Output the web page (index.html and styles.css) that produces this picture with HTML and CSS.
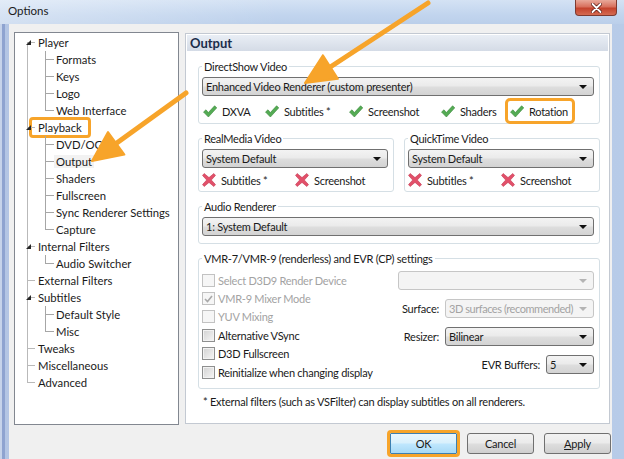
FILE: index.html
```html
<!DOCTYPE html>
<html lang="en">
<head>
    <meta charset="UTF-8" />
    <title>Options</title>
    <link rel="stylesheet" href="styles.css">
</head>
<body>
<div class="window">
    <div class="titlebar">
        <span class="title">Options</span>
        <span class="close">
            <svg width="11" height="10" viewBox="0 0 11 10"><path d="M1.5 1 L9.5 9 M9.5 1 L1.5 9" stroke="#5a1a12" stroke-width="3.4" stroke-linecap="round"/><path d="M1.5 1 L9.5 9 M9.5 1 L1.5 9" stroke="#fff" stroke-width="1.8" stroke-linecap="round"/></svg>
        </span>
    </div>

    <div class="frame">
        <div class="client">
            <div class="main">
                <div class="tree">
                    <ul>
                        <li class="open"><span class="row">Player</span>
                            <ul>
                                <li><span class="row">Formats</span></li>
                                <li><span class="row">Keys</span></li>
                                <li><span class="row">Logo</span></li>
                                <li><span class="row">Web Interface</span></li>
                            </ul>
                        </li>
                        <li class="open"><span class="row"><span class="hl tree-hl">Playback</span></span>
                            <ul>
                                <li><span class="row">DVD/OGM</span></li>
                                <li><span class="row"><span class="sel">Output</span></span></li>
                                <li><span class="row">Shaders</span></li>
                                <li><span class="row">Fullscreen</span></li>
                                <li><span class="row">Sync Renderer Settings</span></li>
                                <li><span class="row">Capture</span></li>
                            </ul>
                        </li>
                        <li class="open"><span class="row">Internal Filters</span>
                            <ul>
                                <li><span class="row">Audio Switcher</span></li>
                            </ul>
                        </li>
                        <li><span class="row">External Filters</span></li>
                        <li class="open"><span class="row">Subtitles</span>
                            <ul>
                                <li><span class="row">Default Style</span></li>
                                <li><span class="row">Misc</span></li>
                            </ul>
                        </li>
                        <li><span class="row">Tweaks</span></li>
                        <li><span class="row">Miscellaneous</span></li>
                        <li><span class="row">Advanced</span></li>
                    </ul>
                </div>

                <div class="page">
                    <div class="page-head">Output</div>
                    <div class="page-body">
                        <fieldset class="group ds">
                            <legend>DirectShow Video</legend>
                            <div class="combo">Enhanced Video Renderer (custom presenter)</div>
                            <div class="caps caps-ds">
                                <span class="cap"><svg class="ok" width="14" height="13" viewBox="0 0 14 13"><path d="M0.5 7 L3 4.8 L5.3 7.6 L11.6 0.8 L13.8 2.8 L5.4 12 Z"/></svg>DXVA</span>
                                <span class="cap"><svg class="ok" width="14" height="13" viewBox="0 0 14 13"><path d="M0.5 7 L3 4.8 L5.3 7.6 L11.6 0.8 L13.8 2.8 L5.4 12 Z"/></svg>Subtitles *</span>
                                <span class="cap"><svg class="ok" width="14" height="13" viewBox="0 0 14 13"><path d="M0.5 7 L3 4.8 L5.3 7.6 L11.6 0.8 L13.8 2.8 L5.4 12 Z"/></svg>Screenshot</span>
                                <span class="cap"><svg class="ok" width="14" height="13" viewBox="0 0 14 13"><path d="M0.5 7 L3 4.8 L5.3 7.6 L11.6 0.8 L13.8 2.8 L5.4 12 Z"/></svg>Shaders</span>
                                <span class="cap hl"><svg class="ok" width="14" height="13" viewBox="0 0 14 13"><path d="M0.5 7 L3 4.8 L5.3 7.6 L11.6 0.8 L13.8 2.8 L5.4 12 Z"/></svg>Rotation</span>
                            </div>
                        </fieldset>

                        <div class="pair">
                            <fieldset class="group">
                                <legend>RealMedia Video</legend>
                                <div class="combo">System Default</div>
                                <div class="caps caps-x">
                                    <span class="cap"><svg class="no" width="14" height="14" viewBox="0 0 14 14"><path d="M2.2 0.5 L7 4.6 L11.8 0.5 L13.5 2.4 L9.3 7 L13.5 11.6 L11.8 13.5 L7 9.4 L2.2 13.5 L0.5 11.6 L4.7 7 L0.5 2.4 Z"/></svg>Subtitles *</span>
                                    <span class="cap"><svg class="no" width="14" height="14" viewBox="0 0 14 14"><path d="M2.2 0.5 L7 4.6 L11.8 0.5 L13.5 2.4 L9.3 7 L13.5 11.6 L11.8 13.5 L7 9.4 L2.2 13.5 L0.5 11.6 L4.7 7 L0.5 2.4 Z"/></svg>Screenshot</span>
                                </div>
                            </fieldset>
                            <fieldset class="group">
                                <legend>QuickTime Video</legend>
                                <div class="combo">System Default</div>
                                <div class="caps caps-x">
                                    <span class="cap"><svg class="no" width="14" height="14" viewBox="0 0 14 14"><path d="M2.2 0.5 L7 4.6 L11.8 0.5 L13.5 2.4 L9.3 7 L13.5 11.6 L11.8 13.5 L7 9.4 L2.2 13.5 L0.5 11.6 L4.7 7 L0.5 2.4 Z"/></svg>Subtitles *</span>
                                    <span class="cap"><svg class="no" width="14" height="14" viewBox="0 0 14 14"><path d="M2.2 0.5 L7 4.6 L11.8 0.5 L13.5 2.4 L9.3 7 L13.5 11.6 L11.8 13.5 L7 9.4 L2.2 13.5 L0.5 11.6 L4.7 7 L0.5 2.4 Z"/></svg>Screenshot</span>
                                </div>
                            </fieldset>
                        </div>

                        <fieldset class="group audio">
                            <legend>Audio Renderer</legend>
                            <div class="combo">1: System Default</div>
                        </fieldset>

                        <fieldset class="group vmr">
                            <legend>VMR-7/VMR-9 (renderless) and EVR (CP) settings</legend>
                            <div class="vmr-grid">
                                <div class="checks">
                                    <label class="check off"><span class="box"></span>Select D3D9 Render Device</label>
                                    <label class="check off"><span class="box"><svg width="9" height="8" viewBox="0 0 9 8"><path d="M1 4 L3.5 6.5 L8 1" fill="none" stroke="#a8a8a8" stroke-width="1.6"/></svg></span>VMR-9 Mixer Mode</label>
                                    <label class="check off"><span class="box"></span>YUV Mixing</label>
                                    <label class="check"><span class="box"></span>Alternative VSync</label>
                                    <label class="check"><span class="box"></span>D3D Fullscreen</label>
                                    <label class="check"><span class="box"></span>Reinitialize when changing display</label>
                                </div>
                                <div class="settings">
                                    <div class="combo off"></div>
                                    <div class="setting">Surface:<div class="combo off">3D surfaces (recommended)</div></div>
                                    <div class="setting">Resizer:<div class="combo">Bilinear</div></div>
                                    <div class="setting evr">EVR Buffers:<div class="combo">5</div></div>
                                </div>
                            </div>
                        </fieldset>

                        <p class="note">* External filters (such as VSFilter) can display subtitles on all renderers.</p>
                    </div>
                </div>
            </div>

            <div class="buttons">
                <span class="btn default hl">OK</span>
                <span class="btn">Cancel</span>
                <span class="btn"><u>A</u>pply</span>
            </div>
        </div>
    </div>

    <!-- callout arrows drawn over the dialog -->
    <svg class="arrows" width="624" height="459" viewBox="0 0 624 459">
        <g fill="#f7a42a" stroke="#f7a42a" stroke-linejoin="round">
            <line x1="428" y1="3" x2="328" y2="68.5" stroke-width="5" stroke-linecap="round"/>
            <polygon points="305,83 337.9,78.8 322.9,55.2" stroke-width="2"/>
            <line x1="186" y1="93" x2="114" y2="145" stroke-width="5" stroke-linecap="round"/>
            <polygon points="92,161 124.4,154.6 108,132" stroke-width="2"/>
        </g>
    </svg>
</div>
</body>
</html>
```

FILE: styles.css
```css
* { box-sizing: border-box; }
body {
    margin: 0;
    font-family: Lato, "Open Sans", sans-serif;
    font-size: 11px;
    letter-spacing: -0.25px;
    color: #1a1a1a;
}

.window {
    position: relative;
    width: 624px;
    height: 459px;
    overflow: hidden;
    display: flex;
    flex-direction: column;
    background: linear-gradient(to right, #c6d3ea 0, #c6d3ea 2px, #8ea3d0 2px, #8ea3d0 5px, #b3c5e4 5px, #bccfea 60%, #b7cbe8);
}

/* ───── title bar ───── */
.titlebar {
    height: 24px;
    flex: none;
    display: flex;
    justify-content: space-between;
    align-items: flex-start;
    padding-left: 8px;
    background: linear-gradient(to right, rgba(255,255,255,0.35), rgba(255,255,255,0) 45%),
                linear-gradient(#d4e2f4, #c2d5ee 60%, #bbcfea);
}
.title {
    line-height: 22px;
    font-size: 11.5px;
    letter-spacing: 0;
    color: #1b1b1b;
}
.close {
    width: 42px;
    height: 16px;
    margin-right: 7px;
    display: flex;
    align-items: center;
    justify-content: center;
    border: 1px solid #7e3a30;
    border-top: 0;
    border-radius: 0 0 4px 4px;
    background: linear-gradient(#e9a99a, #d8705d 45%, #c4432d 55%, #d56b52);
}

.frame {
    flex: 1;
    display: flex;
    padding: 0 12px 0 9px;
}
.client {
    flex: 1;
    background: #f0f0f0;
    padding: 8px 2px 0 5px;
}
.main {
    display: flex;
    gap: 6px;
    height: 393px;
}

/* ───── tree ───── */
.tree {
    width: 165px;
    flex: none;
    background: #fff;
    border: 1px solid #828790;
    padding-top: 1px;
    font-size: 11.3px;
    letter-spacing: 0;
}
.tree ul { list-style: none; margin: 0; padding: 0; }
.tree li { position: relative; }
.tree .row {
    display: block;
    height: 17px;
    line-height: 17px;
    padding-left: 23px;
    white-space: nowrap;
    position: relative;
}
.tree ul ul .row { padding-left: 41px; }

/* connector lines */
.tree > ul > li::before {
    content: "";
    position: absolute;
    left: 12px;
    top: 0;
    bottom: 0;
    border-left: 1px solid #b9b9b9;
}
.tree > ul > li:first-child::before { top: 8px; }
.tree > ul > li:last-child::before { bottom: auto; height: 9px; }
.tree > ul > li::after {
    content: "";
    position: absolute;
    left: 12px;
    top: 8px;
    width: 8px;
    border-top: 1px solid #b9b9b9;
}
.tree ul ul li::before {
    content: "";
    position: absolute;
    left: 30px;
    top: 0;
    bottom: 0;
    border-left: 1px solid #a6a6a6;
}
.tree ul ul li:last-child::before { bottom: auto; height: 9px; }
.tree ul ul li::after {
    content: "";
    position: absolute;
    left: 30px;
    top: 8px;
    width: 9px;
    border-top: 1px solid #a6a6a6;
}
/* expanded-node triangle */
.tree > ul > li.open > .row::before {
    content: "";
    position: absolute;
    left: 11px;
    top: 6px;
    z-index: 1;
    border-style: solid;
    border-width: 0 0 5px 5px;
    border-color: transparent transparent #262626 transparent;
}
.tree .sel { background: #f2f2f2; padding: 0 2px; margin-left: -2px; }
.tree-hl {
    display: inline-block;
    vertical-align: top;
    margin: 1px 0 0 -6px;
    padding: 0 6px;
    line-height: 15px;
}

/* ───── property page ───── */
.page {
    flex: 1;
    height: 391px;
    margin-top: 1px;
    border: 1px solid #c3c9d2;
    background: #fff;
    padding: 1px;
}
.page-head {
    height: 16px;
    line-height: 16px;
    padding-left: 3px;
    font-size: 13px;
    letter-spacing: 0;
    font-weight: bold;
    color: #1b2d4a;
    background: linear-gradient(#e9eef5, #d4dbe6);
}
.page-body { padding: 8px 8px 0 11px; }

.group {
    margin: 0;
    min-width: 0;
    padding: 3px 5px 0 3px;
    border: 1px solid #d5dfe5;
    border-radius: 3px;
}
.group legend {
    padding: 0 2px;
    line-height: 15px;
}
.ds { padding-bottom: 1px; }
.pair {
    display: grid;
    grid-template-columns: 1fr 1fr;
    gap: 10px;
    margin-top: 7px;
}
.audio { margin-top: 7px; padding-bottom: 7px; }
.vmr { margin-top: 7px; padding-bottom: 7px; }

.combo {
    height: 19px;
    display: flex;
    align-items: center;
    justify-content: space-between;
    padding: 0 6px 0 3px;
    border: 1px solid #707070;
    border-radius: 3px;
    background: linear-gradient(#f3f3f3, #ebebeb 45%, #dddddd 55%, #d3d3d3);
    white-space: nowrap;
}
.combo::after {
    content: "";
    flex: none;
    margin-left: auto;
    border-style: solid;
    border-width: 4px 4px 0 4px;
    border-color: #111 transparent transparent transparent;
}
.combo.off {
    border-color: #c6c6c6;
    background: #f4f4f4;
    color: #a3a3a3;
    letter-spacing: -0.45px;
}
.combo.off::after { border-top-color: #b4b4b4; }

/* capability rows */
.caps {
    display: grid;
    height: 22px;
    align-items: center;
}
.caps-ds { grid-template-columns: 62px 84px 92px 69px auto; margin-top: 4px; }
.caps-x { grid-template-columns: 93px auto; margin-top: 1px; }
.cap {
    display: flex;
    align-items: center;
    gap: 5px;
    height: 18px;
    justify-self: start;
}
.cap svg { flex: none; }
.caps-ds .cap svg { margin-left: 1px; }
.ok { fill: #54ab54; stroke: #3b8a3b; stroke-width: 0.6; }
.no { fill: #e2506a; stroke: #c43a52; stroke-width: 0.6; }

/* VMR settings */
.vmr-grid {
    display: grid;
    grid-template-columns: 1fr 196px;
}
.checks { display: flex; flex-direction: column; padding-top: 2px; }
.check {
    height: 18.4px;
    display: flex;
    align-items: center;
    gap: 3px;
    white-space: nowrap;
}
.box {
    width: 13px;
    height: 13px;
    flex: none;
    display: flex;
    align-items: center;
    justify-content: center;
    border: 1px solid #8e8f8f;
    background: linear-gradient(135deg, #d2d2d2, #f6f6f6);
    box-shadow: inset 0 0 0 1px #f2f2f2;
}
.check.off { color: #a3a3a3; }
.check.off .box {
    border-color: #c2c2c2;
    background: #f6f6f6;
    box-shadow: none;
}
.settings {
    display: flex;
    flex-direction: column;
    gap: 9px;
    padding-top: 2px;
}
.setting {
    display: flex;
    align-items: center;
    justify-content: flex-end;
    gap: 6px;
}
.setting .combo { width: 149px; }
.evr .combo { width: 48px; }

.note {
    margin: 5px 0 0;
    padding-left: 5px;
    line-height: 15px;
}

/* ───── buttons ───── */
.buttons {
    display: flex;
    justify-content: flex-end;
    gap: 10px;
    margin: 8px -1px 0 0;
}
.btn {
    width: 67px;
    height: 21px;
    display: flex;
    align-items: center;
    justify-content: center;
    border: 1px solid #707070;
    border-radius: 3px;
    background: linear-gradient(#f2f2f2, #ebebeb 45%, #dddddd 55%, #cfcfcf);
}
.btn.default {
    border-color: #3c7fb1;
    background: linear-gradient(#eaf6fd, #d9f0fc 45%, #bee6fd 55%, #a7d9f5);
}

/* orange call-outs */
.hl {
    outline: 3px solid #f7a42a;
    outline-offset: 1px;
    border-radius: 1px;
}
.cap.hl { padding-right: 3px; }
.tree-hl, .btn.hl { outline-offset: 0; }
.arrows {
    position: absolute;
    left: 0;
    top: 0;
    pointer-events: none;
}
```
